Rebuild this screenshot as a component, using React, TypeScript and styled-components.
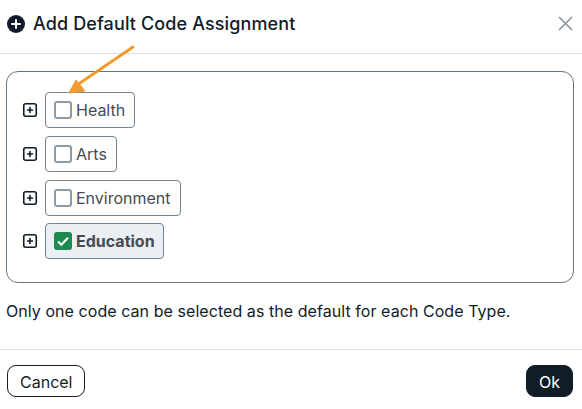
import React from "react";
import styled, { createGlobalStyle } from "styled-components";

const GlobalStyle = createGlobalStyle`
  html, body {
    margin: 0;
    padding: 0;
    background: #fff;
  }
  * {
    box-sizing: border-box;
  }
`;

const Dialog = styled.div`
  position: relative;
  width: 582px;
  height: 409px;
  overflow: hidden;
  background: #fff;
  font-family: Inter, "Liberation Sans", sans-serif;
  color: #101c28;
`;

const Header = styled.header`
  height: 54px;
  padding: 0 8px 5px 7px;
  display: flex;
  align-items: center;
  gap: 8px;
  border-bottom: 1px solid #dfdfdf;
`;

const Title = styled.h2`
  flex: 1;
  margin: 0;
  font-size: 18px;
  font-weight: 500;
  letter-spacing: 0.12px;
  line-height: 24px;
`;

const CloseButton = styled.button`
  width: 18px;
  height: 18px;
  padding: 0;
  border: 0;
  background: none;
  color: #88949d;
  display: flex;
`;

const Body = styled.div`
  padding: 17px 8px 0 6px;
`;

const TreeBox = styled.div`
  height: 212px;
  padding: 20px 0 0 15px;
  border: 1px solid #647380;
  border-radius: 12px;
  display: flex;
  flex-direction: column;
  gap: 8px;
`;

const Row = styled.div<{ $tight?: boolean }>`
  display: flex;
  align-items: center;
  gap: 7px;
  margin-top: ${(p) => (p.$tight ? "-1px" : "0")};
`;

const Expander = styled.span`
  width: 16px;
  height: 16px;
  display: flex;
  color: #101c28;
`;

const Label = styled.label<{ $checked?: boolean }>`
  height: 36px;
  padding: 0 ${(p) => (p.$checked ? "8px" : "9px")} 0 8px;
  display: flex;
  align-items: center;
  gap: 4px;
  border: 1px solid #74838f;
  border-radius: 4px;
  background: ${(p) => (p.$checked ? "#ebeef3" : "#fff")};
  color: #464b50;
  font-size: 16px;
  font-weight: ${(p) => (p.$checked ? 700 : 400)};
  line-height: 20px;
`;

const Box = styled.span<{ $checked?: boolean }>`
  width: 18px;
  height: 18px;
  border-radius: 3px;
  border: ${(p) => (p.$checked ? "0" : "2px solid #8b9aa7")};
  background: ${(p) => (p.$checked ? "#1f8a4f" : "#fff")};
  display: flex;
  align-items: center;
  justify-content: center;
`;

const Note = styled.p`
  margin: 18px 0 0;
  font-size: 16px;
  letter-spacing: 0.06px;
  line-height: 20px;
  color: #101c28;
`;

const Footer = styled.footer`
  position: absolute;
  left: 0;
  right: 0;
  top: 349px;
  height: 60px;
  padding: 15px 9px 0 7px;
  display: flex;
  justify-content: space-between;
  align-items: flex-start;
  border-top: 1px solid #dfdfdf;
`;

const Button = styled.button<{ $primary?: boolean }>`
  height: 32px;
  padding: 1px 12px 0;
  border: 1px solid #101c28;
  border-radius: 9px;
  background: ${(p) => (p.$primary ? "#101c28" : "#fff")};
  color: ${(p) => (p.$primary ? "#fff" : "#101c28")};
  font-family: inherit;
  font-size: 16px;
  line-height: 20px;
`;

const Arrow = styled.svg`
  position: absolute;
  left: 60px;
  top: 40px;
`;

const PlusCircle = () => (
  <svg width="18" height="18" viewBox="0 0 18 18">
    <circle cx="9" cy="9" r="9" fill="#101c28" />
    <path d="M5 9h8M9 5v8" stroke="#fff" strokeWidth="2" strokeLinecap="round" />
  </svg>
);

const PlusSquare = () => (
  <svg width="16" height="16" viewBox="0 0 16 16" fill="none">
    <rect x="1.75" y="1.75" width="12.5" height="12.5" rx="2" stroke="currentColor" strokeWidth="1.6" />
    <path d="M5 8h6M8 5v6" stroke="currentColor" strokeWidth="1.6" />
  </svg>
);

const CloseIcon = () => (
  <svg width="18" height="18" viewBox="0 0 18 18" fill="none">
    <path d="M3.5 2.5l12 12M15.5 2.5l-12 12" stroke="currentColor" strokeWidth="1.7" strokeLinecap="round" />
  </svg>
);

const CheckIcon = () => (
  <svg width="14" height="14" viewBox="0 0 14 14" fill="none">
    <path d="M2 7.5l3.3 3.2L12 3.8" stroke="#fff" strokeWidth="2.2" />
  </svg>
);

const codes = [
  { name: "Health", checked: false },
  { name: "Arts", checked: false },
  { name: "Environment", checked: false },
  { name: "Education", checked: true },
];

const App = () => {
  return (
    <Dialog>
      <GlobalStyle />
      <Header>
        <PlusCircle />
        <Title>Add Default Code Assignment</Title>
        <CloseButton aria-label="Close">
          <CloseIcon />
        </CloseButton>
      </Header>
      <Body>
        <TreeBox>
          {codes.map((code) => (
            <Row key={code.name} $tight={code.checked}>
              <Expander>
                <PlusSquare />
              </Expander>
              <Label $checked={code.checked}>
                <Box $checked={code.checked}>{code.checked && <CheckIcon />}</Box>
                {code.name}
              </Label>
            </Row>
          ))}
        </TreeBox>
        <Note>Only one code can be selected as the default for each Code Type.</Note>
      </Body>
      <Footer>
        <Button>Cancel</Button>
        <Button $primary>Ok</Button>
      </Footer>
      <Arrow width="80" height="56" viewBox="0 0 80 56" fill="none">
        <path d="M73 7L20 43" stroke="#f09a30" strokeWidth="3" strokeLinecap="round" />
        <path d="M9 53L16 40L25 51Z" fill="#f09a30" stroke="#f09a30" strokeWidth="1" strokeLinejoin="round" />
      </Arrow>
    </Dialog>
  );
};

export default App;
